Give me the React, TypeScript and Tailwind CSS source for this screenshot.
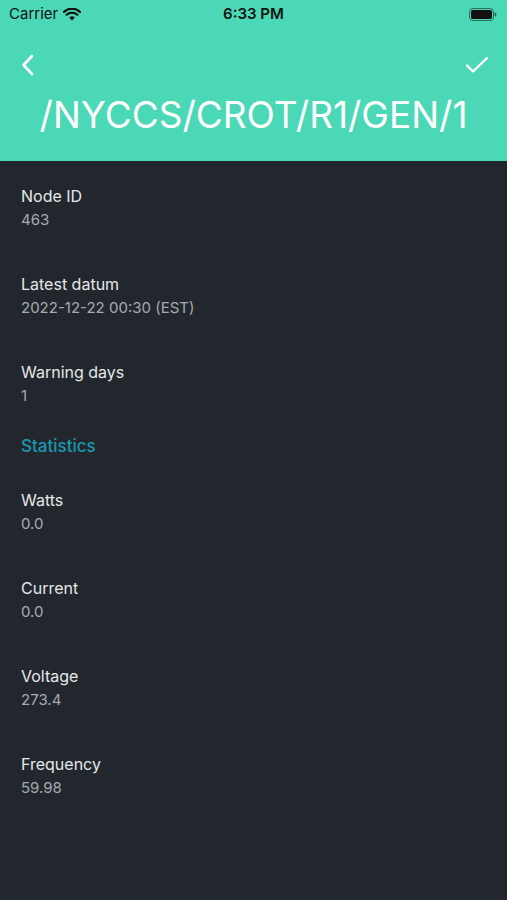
const rows1 = [
  { label: "Node ID", value: "463" },
  { label: "Latest datum", value: "2022-12-22 00:30 (EST)" },
  { label: "Warning days", value: "1" },
];

const rows2 = [
  { label: "Watts", value: "0.0" },
  { label: "Current", value: "0.0" },
  { label: "Voltage", value: "273.4" },
  { label: "Frequency", value: "59.98" },
];

function Row({ label, value }: { label: string; value: string }) {
  return (
    <div className="px-[21px] pt-[25px] pb-[19px]">
      <div className="text-[16px] leading-[20px] text-[#e6e7e8]">{label}</div>
      <div className="mt-1 text-[15px] leading-[20px] text-[#a7abaf]">{value}</div>
    </div>
  );
}

export default function App() {
  return (
    <div
      className="w-[507px] h-[900px] bg-[#22272e] overflow-hidden"
      style={{ fontFamily: "Inter, 'Noto Sans', sans-serif" }}
    >
      {/* HEADER */}
      <div className="bg-[#4bd8b6] h-[161px] flex flex-col">
        {/* status bar */}
        <div className="h-[28px] flex items-center justify-between px-[9px] text-[#111] relative">
          <div className="flex items-center gap-[5px] text-[15px]">
            <span>Carrier</span>
            <svg width="18" height="13" viewBox="0 0 18 13">
              <path d="M9 12.5 L6.2 9.5 A4 4 0 0 1 11.8 9.5 Z" fill="#111" />
              <path d="M3.6 6.8 A7.6 7.6 0 0 1 14.4 6.8" stroke="#111" strokeWidth="2.2" fill="none" strokeLinecap="round" />
              <path d="M1 3.9 A11.5 11.5 0 0 1 17 3.9" stroke="#111" strokeWidth="2.2" fill="none" strokeLinecap="round" />
            </svg>
          </div>
          <div className="absolute left-0 right-0 text-center text-[15px] font-semibold pointer-events-none">
            6:33 PM
          </div>
          <svg width="28" height="13" viewBox="0 0 28 13" className="mr-[1px]">
            <rect x="0.5" y="0.5" width="24" height="12" rx="3.5" fill="none" stroke="#2d6b5c" strokeWidth="1" />
            <rect x="2" y="2" width="21" height="9" rx="2" fill="#111" />
            <rect x="25.5" y="4.5" width="1.8" height="4" rx="0.9" fill="#2d6b5c" />
          </svg>
        </div>
        {/* nav */}
        <div className="flex items-center justify-between px-[20px] mt-[25px]">
          <svg width="16" height="24" viewBox="0 0 16 24">
            <path d="M12 3 L3.5 12 L12 21" stroke="white" strokeWidth="2.6" fill="none" strokeLinecap="round" strokeLinejoin="round" />
          </svg>
          <svg width="24" height="18" viewBox="0 0 24 18" className="mr-[-2px]">
            <path d="M2 9.5 L8 15.5 L22 2" stroke="white" strokeWidth="2.4" fill="none" strokeLinecap="round" strokeLinejoin="round" />
          </svg>
        </div>
        <div className="text-center text-white text-[37px] leading-[44px] mt-[16px]">
          /NYCCS/CROT/R1/GEN/1
        </div>
      </div>

      {/* CONTENT */}
      {rows1.map((r) => (
        <Row key={r.label} {...r} />
      ))}
      <div className="px-[21px] pt-[11px] pb-[9px] text-[17px] leading-[20px] font-medium text-[#1b97ad]">Statistics</div>
      {rows2.map((r) => (
        <Row key={r.label} {...r} />
      ))}
    </div>
  );
}
